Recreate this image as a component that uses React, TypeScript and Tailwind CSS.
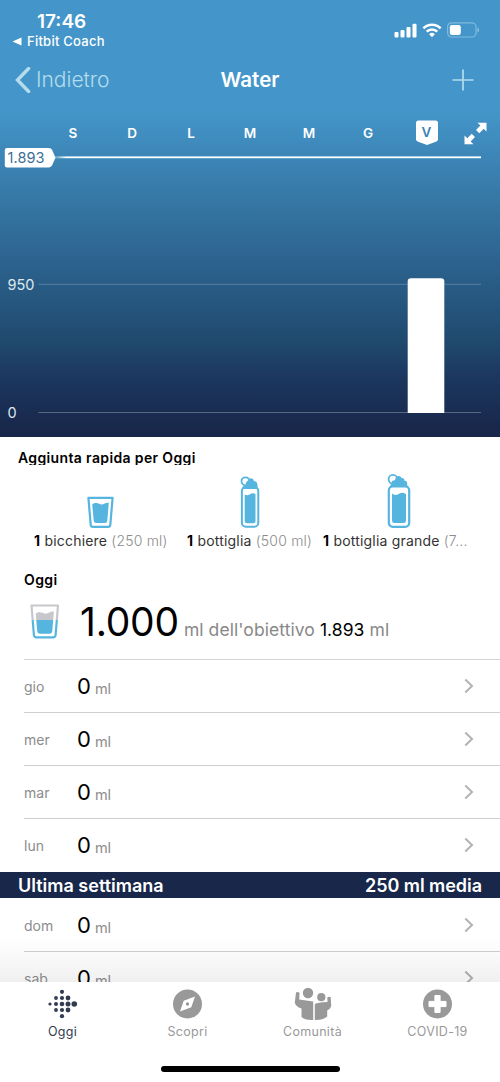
import type { ReactNode } from "react";

const days = ["S", "D", "L", "M", "M", "G", "V"];

const thisWeek = ["gio", "mer", "mar", "lun"];
const lastWeek = ["dom", "sab"];

export default function App() {
  return (
    <div className="flex h-[1082px] w-[500px] flex-col overflow-hidden bg-white font-['Inter',sans-serif] text-black">
      <header className="h-[437px] shrink-0 bg-[linear-gradient(180deg,#4496ca_0px,#4496ca_110px,#387cab_185px,#2c638e_262px,#204a6f_340px,#1c365e_380px,#18274a_430px,#18274a_437px)] text-white">
        <StatusBar />
        <NavBar />
        <DayPicker />
        <WaterChart />
      </header>

      <QuickAdd />
      <Today />

      <div className="shrink-0">
        {thisWeek.map((day, i) => (
          <DayRow key={day} day={day} last={i === thisWeek.length - 1} />
        ))}
      </div>

      <div className="flex h-[26px] shrink-0 items-center justify-between bg-[#18274a] pt-px pr-[18px] pl-[18px] text-[18px] leading-none font-semibold text-white">
        <span>Ultima settimana</span>
        <span className="tracking-[-0.05px]">250 ml media</span>
      </div>

      <div className="relative h-[84px] shrink-0 overflow-hidden pt-px">
        {lastWeek.map((day) => (
          <DayRow key={day} day={day} />
        ))}
        <div className="absolute inset-x-0 bottom-0 h-11 bg-linear-to-b from-black/0 to-black/6" />
      </div>

      <TabBar />
    </div>
  );
}

function StatusBar() {
  return (
    <div className="flex h-[52px] justify-between">
      <div className="pt-[12px] pl-[12px]">
        <div className="pl-[25px] text-[19px] leading-[19px] font-semibold">17:46</div>
        <div className="flex h-[21px] items-center gap-[5px] text-[13px] leading-none font-[450] tracking-[0.25px]">
          <svg width="10" height="9" viewBox="0 0 10 9" fill="white">
            <path d="M0.5 4.5 9.5 0.5V8.5Z" />
          </svg>
          Fitbit Coach
        </div>
      </div>
      <div className="mt-[22px] flex h-[16px] items-center gap-[4px] pr-[20px]">
        <svg width="24" height="15" viewBox="0 0 24 15" fill="white">
          <rect x="0.5" y="9" width="4" height="5.5" rx="1" />
          <rect x="6.5" y="7" width="4" height="7.5" rx="1" />
          <rect x="12.5" y="4" width="4" height="10.5" rx="1" />
          <rect x="18.5" y="0.8" width="4" height="13.7" rx="1" />
        </svg>
        <svg width="20" height="15" viewBox="0 0 20 15" fill="none" stroke="white" strokeWidth="2.6">
          <path d="M1.4 5.3a12.2 12.2 0 0 1 17.2 0" />
          <path d="M4.7 8.7a7.5 7.5 0 0 1 10.6 0" />
          <path d="M7.2 11.2a4 4 0 0 1 5.6 0L10 14.2Z" fill="white" stroke="none" />
        </svg>
        <svg width="34" height="16" viewBox="0 0 34 16" fill="none">
          <rect x="1.6" y="0.8" width="28.4" height="14.2" rx="4" stroke="#7fbbdc" strokeWidth="1.2" />
          <rect x="3.8" y="3" width="11" height="10" rx="2.2" fill="white" />
          <path d="M31.5 5.5v5c2-.8 2-4.2 0-5Z" fill="#8fc6e2" />
        </svg>
      </div>
    </div>
  );
}

function NavBar() {
  return (
    <div className="grid h-[55px] grid-cols-[1fr_auto_1fr] items-center px-[15px] leading-none">
      <div className="flex items-center gap-[5px] text-[21px] font-light text-[#b4dcec]">
        <svg width="16" height="26" viewBox="0 0 16 26" fill="none" stroke="#b4dcec" strokeWidth="3.4">
          <path d="M13.6 1.5 2.5 13 13.6 24.5" strokeLinecap="round" />
        </svg>
        Indietro
      </div>
      <div className="pt-[2px] text-[20.5px] font-semibold">Water</div>
      <svg className="mr-[11px] justify-self-end" width="22" height="22" viewBox="0 0 22 22" stroke="#b4dcec" strokeWidth="1.7">
        <path d="M11 0.5V21.5M0.5 11H21.5" />
      </svg>
    </div>
  );
}

function DayPicker() {
  return (
    <div className="flex h-[50px] items-center pl-[43px] text-[13.5px] leading-none font-semibold">
      {days.map((day, i) => (
        <div key={i} className="flex w-[59px] justify-center">
          {day === "V" ? <SelectedDay>{day}</SelectedDay> : <span className="pt-[3px] pl-px">{day}</span>}
        </div>
      ))}
      <svg className="mt-[2px] ml-[8px]" width="23" height="23" viewBox="0 0 23 23" fill="white">
        <path d="M13.5 0.8H22.5V9.6L19.7 6.8 15.3 11.2 12 7.9 16.4 3.5Z" />
        <path d="M9.5 22.2H0.5V13.4L3.3 16.2 7.7 11.8 11 15.1 6.6 19.5Z" />
      </svg>
    </div>
  );
}

function SelectedDay({ children }: { children: ReactNode }) {
  return (
    <div className="relative h-[25px] w-[22px] text-[#3b82b2]">
      <svg className="absolute inset-0" width="22" height="25" viewBox="0 0 22 25" fill="white">
        <path d="M2.5 0.5H19.5Q22 0.5 22 3V19.2Q22 20.8 20.5 21.4L11 25 1.5 21.4Q0 20.8 0 19.2V3Q0 0.5 2.5 0.5Z" />
      </svg>
      <div className="relative flex h-[25px] items-center justify-center pt-px">{children}</div>
    </div>
  );
}

function WaterChart() {
  return (
    <svg className="-mt-[11px] block" width="500" height="290" viewBox="0 146 500 290" fontSize="14.5">
      <defs>
        <linearGradient id="goal" gradientUnits="userSpaceOnUse" x1="56" y1="0" x2="66" y2="0">
          <stop offset="0" stopColor="white" stopOpacity="0" />
          <stop offset="1" stopColor="white" />
        </linearGradient>
      </defs>
      <rect x="54" y="156" width="427" height="2.6" fill="#9be0ef" opacity="0.35" />
      <rect x="56" y="156.5" width="425" height="1.6" fill="url(#goal)" />
      <path d="M7 148H49Q51 148 52 149.7L55.5 157.7 52 165.6Q51 167.4 49 167.4H7Q4.8 167.4 4.8 165.2V150.2Q4.8 148 7 148Z" fill="white" />
      <text x="7.5" y="163" fill="#3d7096" letterSpacing="0.1">1.893</text>
      <path d="M38.5 284.3H481" stroke="white" strokeOpacity="0.22" />
      <path d="M38.5 412.5H481" stroke="white" strokeOpacity="0.28" />
      <path d="M407.7 413V281.5Q407.7 278.2 411 278.2H441Q444.3 278.2 444.3 281.5V413Z" fill="white" />
      <text x="7.5" y="290" fill="#dce8ef">950</text>
      <text x="7.5" y="418" fill="#dce8ef">0</text>
    </svg>
  );
}

function QuickAdd() {
  return (
    <section className="h-[123px] shrink-0">
      <h2 className="ml-[18px] h-[28px] overflow-hidden pt-[12px] text-[14px] leading-[18px] font-semibold tracking-[0.36px]">
        Aggiunta rapida per Oggi
      </h2>
      <div className="flex h-[63px] items-end">
        <div className="flex w-[201px] justify-center">
          <GlassIcon />
        </div>
        <div className="flex w-[98px] justify-center">
          <BottleIcon />
        </div>
        <div className="flex w-[200px] justify-center">
          <LargeBottleIcon />
        </div>
      </div>
      <div className="flex h-[26px] items-center pl-[34px] text-[14px] leading-none tracking-[0.2px] whitespace-nowrap">
        <QuickLabel className="w-[153px]" name="bicchiere" amount="(250 ml)" />
        <QuickLabel className="w-[136px]" name="bottiglia" amount="(500 ml)" />
        <QuickLabel className="w-[150px]" name="bottiglia grande" amount="(7..." />
      </div>
    </section>
  );
}

function QuickLabel({ className, name, amount }: { className: string; name: string; amount: string }) {
  return (
    <div className={className}>
      <b className="font-bold">1</b> <span className="text-[#333]">{name}</span>{" "}
      <span className="font-light text-[#8c8c8c]">{amount}</span>
    </div>
  );
}

function GlassIcon() {
  return (
    <svg width="27" height="32" viewBox="0 0 27 32">
      <path d="M1.4 1.8H25.6L23.3 28.8Q23.1 30.8 21.1 30.8H5.9Q3.9 30.8 3.7 28.8Z" fill="white" stroke="#56b5df" strokeWidth="2.2" strokeLinejoin="round" />
      <path d="M5.2 8.6C8 5.8 10.5 7.2 13.5 8.2 16.5 9.2 18.8 6 21.8 6.8L20.3 24.8Q20 27 17.8 27H9.2Q7 27 6.7 24.8Z" fill="#56b5df" />
    </svg>
  );
}

function BottleIcon() {
  return (
    <svg width="20" height="52" viewBox="0 0 20 52">
      <circle cx="5.5" cy="5.3" r="4" fill="none" stroke="#56b5df" strokeWidth="1.8" />
      <path d="M2.5 14V10.5Q4 9.8 5.8 9.5 5 6 8 4.5 10 .8 13 3L14 5Q17.5 5.5 17.5 9V14Z" fill="#56b5df" />
      <rect x="1.9" y="11" width="16.4" height="39.8" rx="4" fill="white" stroke="#56b5df" strokeWidth="2" />
      <path d="M3 11H17V13H3Z" fill="#56b5df" />
      <path d="M4.7 18.5C7.2 20 9 19 11 17.8 12.5 17 14 17.2 15.5 18.2V45Q15.500 47.3 13.3 47.3H6.9Q4.7 47.3 4.7 45Z" fill="#56b5df" />
    </svg>
  );
}

function LargeBottleIcon() {
  return (
    <svg width="24" height="55" viewBox="0 0 24 55">
      <circle cx="5.9" cy="6.2" r="4.3" fill="none" stroke="#56b5df" strokeWidth="1.8" />
      <path d="M3.5 14V12Q4.2 10.8 5 10.5 3.6 7.5 8 7.3 8.5 3 11.5 3 14 3 14.5 5 17.5 4.8 17.5 7.8 20.7 8 20.2 11.2V14Z" fill="#56b5df" />
      <rect x="1.8" y="13.4" width="20.4" height="40.4" rx="4" fill="white" stroke="#56b5df" strokeWidth="2.2" />
      <path d="M5 20.5C8 22.8 10.5 21.8 12.5 20.5 14.5 19.5 16.5 19.5 19 21.2V47.5Q19 50 16.6 50H7.4Q5 50 5 47.5Z" fill="#56b5df" />
    </svg>
  );
}

function Today() {
  return (
    <section className="flex h-[100px] shrink-0 flex-col">
      <h2 className="pt-[10px] pl-[24px] text-[14px] leading-[19px] font-semibold tracking-[0.4px]">Oggi</h2>
      <div className="flex h-[65px] items-center pl-[30px]">
        <TodayGlass />
        <div className="ml-[20px] flex items-baseline leading-none">
          <span className="text-[39px] tracking-[-0.2px]">1.000</span>
          <span className="ml-[5px] text-[17.5px] tracking-[0.07px] whitespace-nowrap text-[#888]">
            ml dell'obiettivo <span className="text-black">1.893</span> ml
          </span>
        </div>
      </div>
      <div className="mt-auto ml-[24px] h-px bg-[#d4d4d4]" />
    </section>
  );
}

function TodayGlass() {
  return (
    <svg width="30" height="35" viewBox="0 0 30 35">
      <defs>
        <linearGradient id="level" gradientUnits="userSpaceOnUse" x1="0" y1="0" x2="0" y2="35">
          <stop offset="0.46" stopColor="#c7c7cc" />
          <stop offset="0.46" stopColor="#56b5df" />
        </linearGradient>
      </defs>
      <path d="M1.5 1.5H28L25.6 31Q25.4 33.4 23 33.4H6.5Q4.1 33.4 3.9 31Z" fill="none" stroke="url(#level)" strokeWidth="2.2" strokeLinejoin="round" />
      <path d="M5.7 9.5C9 7 12 8.5 15 9.6 18 10.3 20.5 6.8 23.9 7.6L22.3 27Q22 29.7 19.5 29.7H10Q7.5 29.7 7.2 27Z" fill="url(#level)" />
    </svg>
  );
}

function DayRow({ day, last = false }: { day: string; last?: boolean }) {
  return (
    <div className="h-[53px] pl-[24px]">
      <div className="flex h-[52px] items-center leading-none">
        <span className="w-[53px] pt-px text-[14px] text-[#8c8c8c]">{day}</span>
        <span className="text-[22px]">0</span>
        <span className="ml-[4px] pt-[6px] text-[14.5px] tracking-[-0.2px] text-[#8c8c8c]">ml</span>
        <svg className="mr-[26px] ml-auto" width="10" height="16" viewBox="0 0 10 16" fill="none" stroke="#b3b3b6" strokeWidth="2">
          <path d="M1.3 1.5 8 8 1.3 14.5" />
        </svg>
      </div>
      {!last && <div className="h-px bg-[#cfcfcf]" />}
    </div>
  );
}

// x, y, radius
const logoDots = [
  [2, 15, 1.6],
  [8, 9, 1.9], [8, 15, 2], [8, 21, 1.9],
  [14, 2.8, 2.1], [14, 9, 2.1], [14, 15, 2.3], [14, 21, 2.1], [14, 27.2, 2.1],
  [20, 9, 2.4], [20, 15, 2.5], [20, 21, 2.4],
  [26.3, 15, 2.8],
];

function TabBar() {
  return (
    <nav className="flex h-[100px] shrink-0 flex-col items-center bg-white">
      <div className="flex w-full pt-[5px]">
        <Tab label="Oggi" active>
          <svg width="30" height="34" viewBox="0 -2 30 34" fill="#323b50">
            {logoDots.map(([x, y, r], i) => (
              <circle key={i} cx={x} cy={y} r={r} />
            ))}
          </svg>
        </Tab>
        <Tab label="Scopri">
          <svg width="30" height="34" viewBox="0.5 -2 30 34">
            <circle cx="15" cy="15" r="14.5" fill="#999" />
            <path d="M22.5 7.5 18.8 18.3 7.5 22.5 11.2 11.7Z" fill="white" />
            <circle cx="15" cy="15" r="1.7" fill="#999" />
          </svg>
        </Tab>
        <Tab label="Comunità">
          <svg width="38" height="34" viewBox="0 0 38 34" fill="#999">
            <circle cx="14" cy="6" r="5.2" />
            <circle cx="27.3" cy="10.2" r="4.1" />
            <path d="M2 5.5Q4 4.5 5.5 5.8L5.2 12.5Q12 13.5 19.2 14.5V33Q11 33.5 7.5 30V21.5Q1.5 19.5 0.8 15.5Z" />
            <path d="M20.8 17.5Q21 15.5 33.5 15L33.3 10.5Q35 9.3 36.7 10.3L37.2 18.5Q36.7 21.8 33.2 23.5V29.5Q29 33.2 20.8 33Z" />
          </svg>
        </Tab>
        <Tab label="COVID-19">
          <svg width="30" height="34" viewBox="0.5 -2 30 34">
            <circle cx="15" cy="15" r="14.5" fill="#999" />
            <path d="M12.4 6.5H17.6V12.4H23.5V17.6H17.6V23.5H12.4V17.6H6.5V12.4H12.4Z" fill="white" stroke="white" strokeLinejoin="round" />
          </svg>
        </Tab>
      </div>
      <div className="mt-auto mb-[10px] h-[6px] w-[179px] rounded-full bg-black" />
    </nav>
  );
}

function Tab({ label, active = false, children }: { label: string; active?: boolean; children: ReactNode }) {
  return (
    <div className="flex flex-1 flex-col items-center">
      {children}
      <span
        className={
          active
            ? "mt-[3px] text-[12.5px] leading-[16px] tracking-[0.3px] text-[#323b50]"
            : "mt-[3px] text-[12.5px] leading-[16px] tracking-[0.3px] text-[#999]"
        }
      >
        {label}
      </span>
    </div>
  );
}
